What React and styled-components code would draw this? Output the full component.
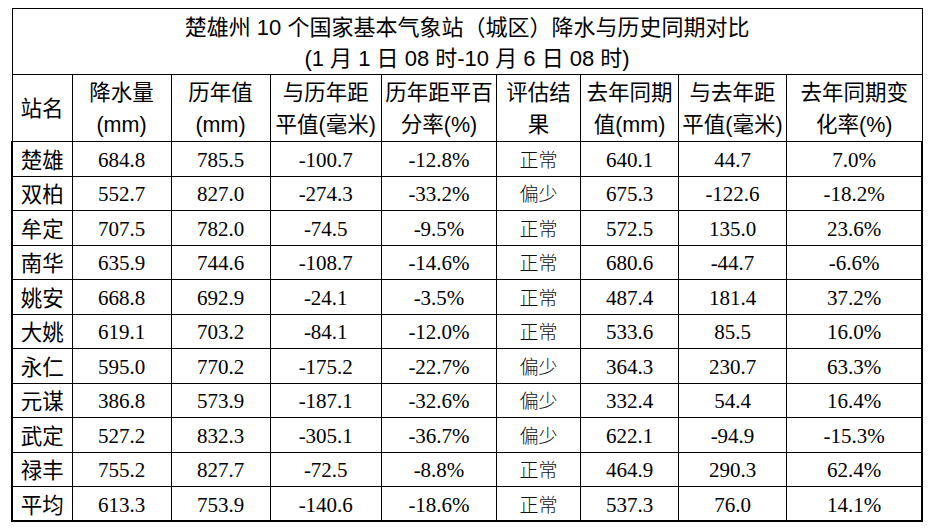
import React from 'react';
import styled, { createGlobalStyle } from 'styled-components';

const GlobalStyle = createGlobalStyle`
  html, body {
    margin: 0;
    padding: 0;
    background: #fff;
  }
`;

// 站点数据
const rows = [
  ['楚雄', '684.8', '785.5', '-100.7', '-12.8%', '正常', '640.1', '44.7', '7.0%'],
  ['双柏', '552.7', '827.0', '-274.3', '-33.2%', '偏少', '675.3', '-122.6', '-18.2%'],
  ['牟定', '707.5', '782.0', '-74.5', '-9.5%', '正常', '572.5', '135.0', '23.6%'],
  ['南华', '635.9', '744.6', '-108.7', '-14.6%', '正常', '680.6', '-44.7', '-6.6%'],
  ['姚安', '668.8', '692.9', '-24.1', '-3.5%', '正常', '487.4', '181.4', '37.2%'],
  ['大姚', '619.1', '703.2', '-84.1', '-12.0%', '正常', '533.6', '85.5', '16.0%'],
  ['永仁', '595.0', '770.2', '-175.2', '-22.7%', '偏少', '364.3', '230.7', '63.3%'],
  ['元谋', '386.8', '573.9', '-187.1', '-32.6%', '偏少', '332.4', '54.4', '16.4%'],
  ['武定', '527.2', '832.3', '-305.1', '-36.7%', '偏少', '622.1', '-94.9', '-15.3%'],
  ['禄丰', '755.2', '827.7', '-72.5', '-8.8%', '正常', '464.9', '290.3', '62.4%'],
  ['平均', '613.3', '753.9', '-140.6', '-18.6%', '正常', '537.3', '76.0', '14.1%'],
];

const headers = [
  ['站名'],
  ['降水量', '(mm)'],
  ['历年值', '(mm)'],
  ['与历年距', '平值(毫米)'],
  ['历年距平百', '分率(%)'],
  ['评估结', '果'],
  ['去年同期', '值(mm)'],
  ['与去年距', '平值(毫米)'],
  ['去年同期变', '化率(%)'],
];

const colWidths = [60, 99, 99, 111.5, 115, 84, 98, 108, 135.5];

const App = () => {
  return (
    <Page>
      <GlobalStyle />
      <Table>
        <colgroup>
          {colWidths.map((w, i) => (
            <col key={i} style={{ width: w }} />
          ))}
        </colgroup>
        <thead>
          <TitleRow>
            <TitleCell colSpan="9">
              楚雄州 10 个国家基本气象站（城区）降水与历史同期对比
              <br />
              (1 月 1 日 08 时-10 月 6 日 08 时)
            </TitleCell>
          </TitleRow>
          <HeadRow>
            {headers.map((h, i) => (
              <HeadCell key={i}>
                {h.map((line, j) => (
                  <React.Fragment key={j}>
                    {j > 0 && <br />}
                    {line}
                  </React.Fragment>
                ))}
              </HeadCell>
            ))}
          </HeadRow>
        </thead>
        <tbody>
          {rows.map((r, idx) => (
            <DataRow key={idx}>
              <NameCell>{r[0]}</NameCell>
              <NumCell>{r[1]}</NumCell>
              <NumCell>{r[2]}</NumCell>
              <NumCell>{r[3]}</NumCell>
              <NumCell>{r[4]}</NumCell>
              <EvalCell>{r[5]}</EvalCell>
              <NumCell>{r[6]}</NumCell>
              <NumCell>{r[7]}</NumCell>
              <NumCell>{r[8]}</NumCell>
            </DataRow>
          ))}
        </tbody>
      </Table>
    </Page>
  );
};

export default App;

const Page = styled.div`
  padding: 8px 0 0 11px;
`;

const Table = styled.table`
  width: 910px;
  table-layout: fixed;
  border-collapse: collapse;
  color: #000;
  text-align: center;

  td, th {
    border: 1px solid #000;
    padding: 0;
    overflow: hidden;
    white-space: nowrap;
  }
`;

const TitleRow = styled.tr`
  height: 66px;
`;

const TitleCell = styled.th`
  font-family: 'Liberation Sans', 'Noto Sans CJK SC', sans-serif;
  font-weight: normal;
  font-size: 22px;
  line-height: 31px;
  && {
    padding-top: 3px;
  }
`;

const HeadRow = styled.tr`
  height: 67px;
`;

const HeadCell = styled.th`
  font-family: 'Liberation Sans', 'Noto Sans CJK SC', sans-serif;
  font-weight: normal;
  font-size: 21.5px;
  line-height: 32px;
  && {
    padding-top: 2px;
  }
`;

const DataRow = styled.tr`
  height: 34.5px;

  td:first-child {
    border-left: 2px solid #000;
  }
  td:last-child {
    border-right: 2px solid #000;
  }
  &:last-child td {
    border-bottom: 2px solid #000;
  }
`;

const NameCell = styled.td`
  font-family: 'Noto Sans CJK SC', sans-serif;
  font-size: 21.5px;
  line-height: 30px;
`;

const NumCell = styled.td`
  font-family: 'Liberation Serif', serif;
  font-size: 21px;
  line-height: 30px;
  && {
    padding-top: 2px;
  }
`;

const EvalCell = styled.td`
  font-family: 'Noto Sans CJK SC', sans-serif;
  font-weight: 300;
  font-size: 19px;
  line-height: 30px;
  color: #111;
`;
